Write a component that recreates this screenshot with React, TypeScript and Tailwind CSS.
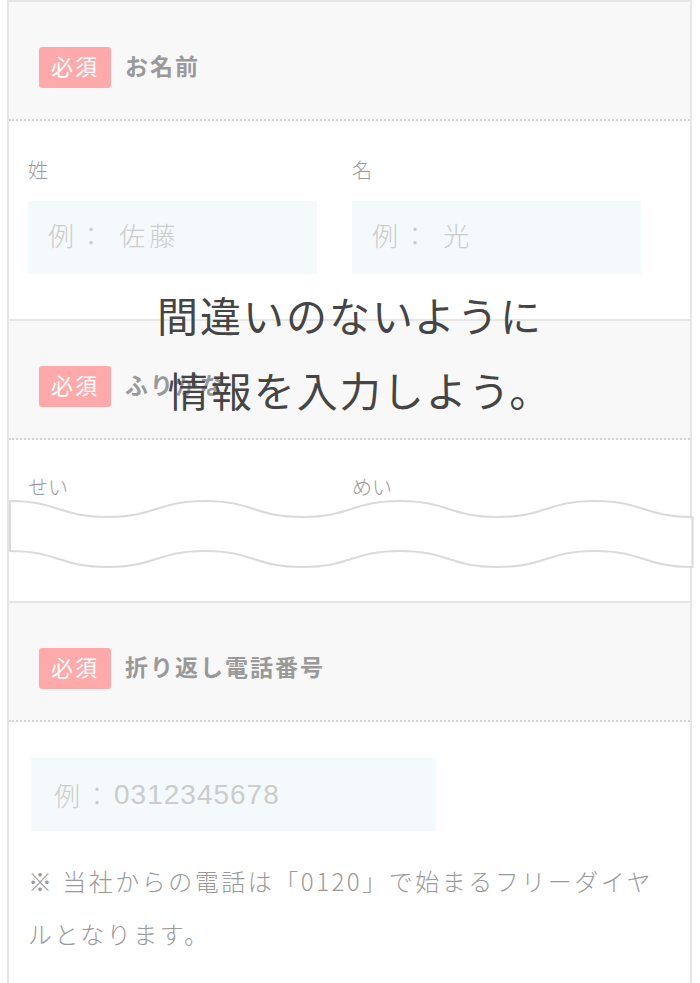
import type { ReactNode } from "react";

const jp = "font-['Liberation_Sans','Noto_Sans_CJK_JP',sans-serif]";
const cjk = "font-['Noto_Sans_CJK_JP',sans-serif]";

function Badge() {
  return (
    <span className="flex h-[41px] w-[72px] items-center justify-center rounded-[3px] bg-[#ffaaaa] text-[22px] leading-none tracking-[2px] text-white">
      必須
    </span>
  );
}

function SectionHeader({ title }: { title: string }) {
  return (
    <div className="flex h-[119px] items-center gap-[14px] border-b-2 border-dotted border-[#d2d2d2] bg-[#f8f8f8] pt-[14px] pl-[30px]">
      <Badge />
      <span className="text-[23px] font-bold tracking-[2px] text-[#999]">
        {title}
      </span>
    </div>
  );
}

interface FieldProps {
  label: string;
  children?: ReactNode;
}

function Field({ label, children }: FieldProps) {
  return (
    <div className="flex flex-col">
      <span className="h-[30px] text-[20px] leading-[30px] font-light text-[#9a9a9a]">
        {label}
      </span>
      {children}
    </div>
  );
}

function FakeInput({
  placeholder,
  className,
}: {
  placeholder: ReactNode;
  className: string;
}) {
  return (
    <div
      className={`flex h-[73px] items-center bg-[#f4f9fc] text-[26px] font-light text-[#cccccc] ${className}`}
    >
      {placeholder}
    </div>
  );
}

function Wave() {
  return (
    <svg
      className="absolute top-[500px] left-[9px]"
      width="685"
      height="68"
      viewBox="0 0 685 68"
      fill="none"
    >
      <path
        d="M1 1 C49.75 1 49.75 17 98.5 17 C147.25 17 147.25 1 196 1 C244.75 1 244.75 17 293.5 17 C342.25 17 342.25 1 391 1 C439.75 1 439.75 17 488.5 17 C537.25 17 537.25 1 586 1 C634.75 1 634.75 17 683.5 17 L683.5 67 C634.75 67 634.75 51 586 51 C537.25 51 537.25 67 488.5 67 C439.75 67 439.75 51 391 51 C342.25 51 342.25 67 293.5 67 C244.75 67 244.75 51 196 51 C147.25 51 147.25 67 98.5 67 C49.75 67 49.75 51 1 51 Z"
        fill="#ffffff"
        stroke="#dadada"
        strokeWidth="2"
      />
    </svg>
  );
}

export default function App() {
  return (
    <div
      className={`relative flex h-[983px] w-[700px] flex-col overflow-hidden bg-white ${jp}`}
    >
      <div className="ml-[7px] w-[685px] flex-1 border-x-2 border-t-2 border-[#e6e6e6]">
        {/* お名前 */}
        <SectionHeader title="お名前" />
        <div className="grid h-[198px] grid-cols-[289px_289px] gap-[35px] pt-[35px] pl-[19px]">
          <Field label="姓">
            <FakeInput
              className="mt-[15px] pl-[20px] tracking-[4px]"
              placeholder="例： 佐藤"
            />
          </Field>
          <Field label="名">
            <FakeInput
              className="mt-[15px] pl-[20px] tracking-[4px]"
              placeholder="例： 光"
            />
          </Field>
        </div>

        {/* ふりがな */}
        <div className="border-t-2 border-[#e6e6e6]">
          <SectionHeader title="ふりがな" />
          <div className="grid h-[161px] grid-cols-[289px_289px] gap-[35px] pt-[33px] pl-[19px]">
            <Field label="せい" />
            <Field label="めい" />
          </div>
        </div>

        {/* 折り返し電話番号 */}
        <div className="border-t-2 border-[#e6e6e6]">
          <SectionHeader title="折り返し電話番号" />
          <div className="pt-[36px] pr-[30px] pl-[19px]">
            <FakeInput
              className="ml-[3px] w-[405px] pl-[23px]"
              placeholder={
                <>
                  <span className={`tracking-[4px] ${cjk}`}>例：</span>
                  <span className="text-[28px] tracking-[1px]">0312345678</span>
                </>
              }
            />
            <p
              className={`mt-[23px] text-[24px] leading-[53px] font-light tracking-[2.5px] text-[#9a9a9a] ${cjk}`}
            >
              ※ 当社からの電話は「0120」で始まるフリーダイヤルとなります。
            </p>
          </div>
        </div>
      </div>

      <Wave />

      <div className="absolute top-[281px] left-0 w-[700px] text-center text-[41px] leading-[75px] font-normal tracking-[2px] text-[#454545]">
        <p>間違いのないように</p>
        <p className="pl-[20px]">情報を入力しよう。</p>
      </div>
    </div>
  );
}
